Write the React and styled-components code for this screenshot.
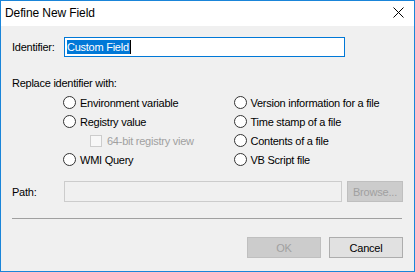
import React from "react";
import styled, { createGlobalStyle } from "styled-components";

const Global = createGlobalStyle`
  html, body { margin: 0; padding: 0; background: #f0f0f0; }
  * { box-sizing: border-box; }
`;

const Window = styled.div`
  width: 415px;
  height: 272px;
  border: 1px solid #1a85d9;
  background: #f0f0f0;
  display: flex;
  flex-direction: column;
  font-family: "Liberation Sans", Arial, sans-serif;
  font-size: 11px;
  color: #000;
`;

const TitleBar = styled.div`
  height: 25px;
  flex: none;
  background: #fff;
  display: flex;
  align-items: center;
  justify-content: space-between;
  padding: 0 10px 0 4px;
`;

const Title = styled.span`
  font-size: 12px;
  letter-spacing: -0.1px;
  margin-top: -1px;
`;

const Close = styled.svg`
  width: 11px;
  height: 11px;
  margin-top: -2px;
`;

const Body = styled.div`
  flex: 1;
  display: flex;
  flex-direction: column;
  padding: 0 11px;
`;

const FieldRow = styled.div`
  display: flex;
  align-items: center;
  margin-top: ${(p) => p.$top}px;
`;

const Label = styled.span`
  width: 52px;
  flex: none;
  letter-spacing: -0.25px;
`;

const TextBox = styled.div`
  width: ${(p) => p.$w}px;
  height: ${(p) => p.$h}px;
  border: 1px solid ${(p) => (p.$disabled ? "#cccccc" : "#0078d7")};
  background: ${(p) => (p.$disabled ? "#f0f0f0" : "#fff")};
  display: flex;
  align-items: center;
  padding-left: 2px;
`;

const Selected = styled.span`
  background: #0078d7;
  color: #fff;
  line-height: 14px;
  height: 14px;
  padding: 0 1px 0 0;
  letter-spacing: -0.25px;
`;

const Caret = styled.span`
  width: 1px;
  height: 14px;
  background: #000;
`;

const SectionLabel = styled.div`
  margin-top: 19px;
  line-height: 14px;
  letter-spacing: -0.25px;
`;

const Options = styled.div`
  display: flex;
  margin-top: 3px;
  margin-left: 51px;
`;

const Column = styled.div`
  width: ${(p) => p.$w}px;
  display: flex;
  flex-direction: column;
`;

const Option = styled.div`
  height: 19px;
  display: flex;
  align-items: center;
  gap: ${(p) => (p.$check ? 5 : 4)}px;
  padding-left: ${(p) => p.$indent || 0}px;
  color: ${(p) => (p.$disabled ? "#a0a0a0" : "#000")};
  letter-spacing: -0.25px;
  white-space: nowrap;
`;

const Radio = styled.span`
  width: 13px;
  height: 13px;
  flex: none;
  border: 1px solid #333;
  border-radius: 50%;
  background: #fff;
`;

const Check = styled.span`
  width: 12px;
  height: 12px;
  flex: none;
  border: 1px solid #cccccc;
  background: #f7f7f7;
`;

const Button = styled.div`
  width: ${(p) => p.$w}px;
  height: 21px;
  flex: none;
  margin-left: ${(p) => p.$ml || 0}px;
  display: flex;
  align-items: center;
  justify-content: center;
  border: 1px solid ${(p) => (p.$disabled ? "#bfbfbf" : "#adadad")};
  background: ${(p) => (p.$disabled ? "#cccccc" : "#e1e1e1")};
  color: ${(p) => (p.$disabled ? "#a0a0a0" : "#000")};
  letter-spacing: -0.2px;
`;

const Separator = styled.div`
  margin-top: 16px;
  width: 390px;
  height: 1px;
  background: #a0a0a0;
`;

const Footer = styled.div`
  margin-top: 18px;
  display: flex;
  justify-content: flex-end;
  gap: 8px;
`;

const left = ["Environment variable", "Registry value"];
const right = [
  "Version information for a file",
  "Time stamp of a file",
  "Contents of a file",
  "VB Script file",
];

export default function App() {
  return (
    <>
      <Global />
      <Window>
        <TitleBar>
          <Title>Define New Field</Title>
          <Close viewBox="0 0 11 11">
            <path d="M0.5 0.5 L10.5 10.5 M10.5 0.5 L0.5 10.5" stroke="#000" strokeWidth="1" fill="none" />
          </Close>
        </TitleBar>
        <Body>
          <FieldRow $top={11}>
            <Label>Identifier:</Label>
            <TextBox $w={281} $h={20}>
              <Selected>Custom Field</Selected>
              <Caret />
            </TextBox>
          </FieldRow>
          <SectionLabel>Replace identifier with:</SectionLabel>
          <Options>
            <Column $w={171}>
              {left.map((t) => (
                <Option key={t}>
                  <Radio />
                  {t}
                </Option>
              ))}
              <Option $indent={27} $check $disabled>
                <Check />
                64-bit registry view
              </Option>
              <Option>
                <Radio />
                WMI Query
              </Option>
            </Column>
            <Column $w={170}>
              {right.map((t) => (
                <Option key={t}>
                  <Radio />
                  {t}
                </Option>
              ))}
            </Column>
          </Options>
          <FieldRow $top={12}>
            <Label>Path:</Label>
            <TextBox $w={278} $h={21} $disabled />
            <Button $w={56} $ml={5} $disabled>
              Browse...
            </Button>
          </FieldRow>
          <Separator />
          <Footer>
            <Button $w={74} $disabled>OK</Button>
            <Button $w={74}>Cancel</Button>
          </Footer>
        </Body>
      </Window>
    </>
  );
}
